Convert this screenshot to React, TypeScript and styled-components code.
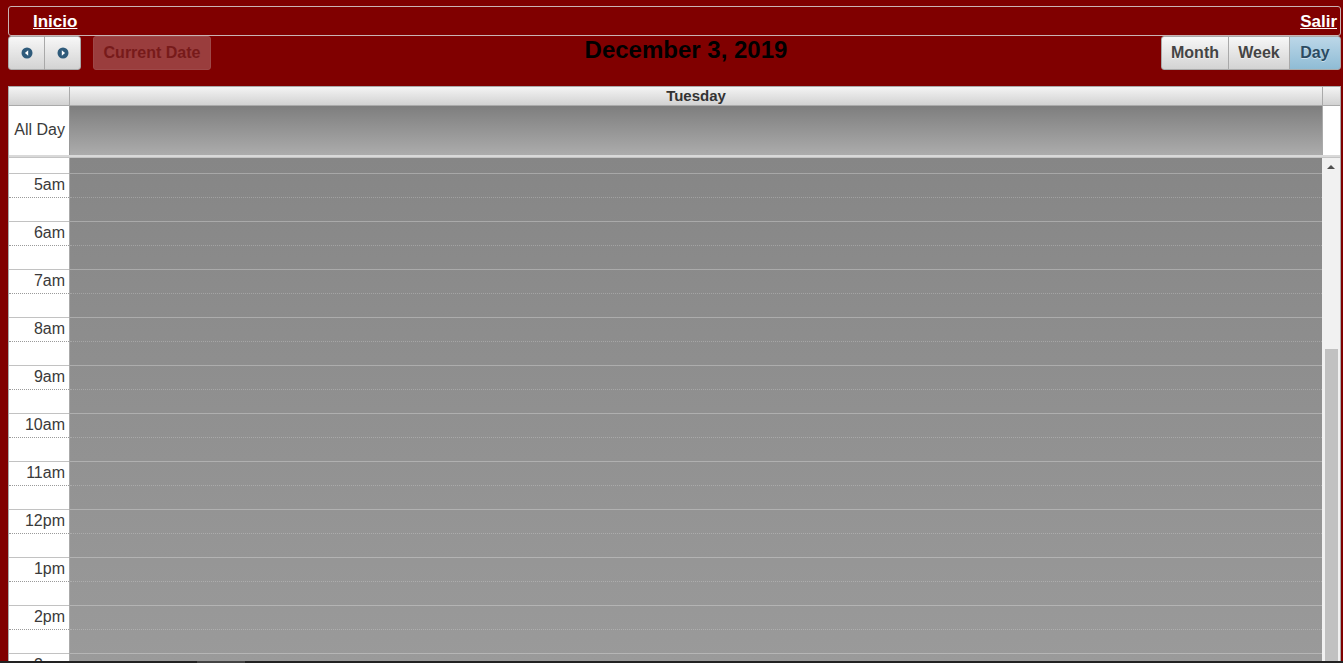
import React from 'react';
import styled, { createGlobalStyle } from 'styled-components';

const Global = createGlobalStyle`
  html, body { margin: 0; padding: 0; height: 100%; overflow: hidden; background: #800000; }
  body { font-family: "Liberation Sans", Arial, Helvetica, sans-serif; }
  * { box-sizing: border-box; }
`;

const Page = styled.div`
  height: 663px;
  display: flex;
  flex-direction: column;
  background: #800000;
  overflow: hidden;
`;

const Main = styled.div`
  flex: 1;
  min-height: 0;
  display: flex;
  flex-direction: column;
  padding: 6px 2px 0 8px;
`;

const NavBox = styled.nav`
  height: 30px;
  border: 1px solid #c9b3b3;
  border-radius: 3px;
  display: flex;
  align-items: center;
  justify-content: space-between;
  padding: 1px 3px 0 24px;
`;

const NavLink = styled.a`
  color: #fff;
  font-weight: bold;
  font-size: 17px;
  text-decoration: underline;
  cursor: pointer;
`;

const Toolbar = styled.div`
  display: flex;
  align-items: flex-start;
  height: 34px;
  margin-bottom: 16px;
`;

const Section = styled.div<{ $w?: number; $justify?: string }>`
  display: flex;
  width: ${(p) => (p.$w ? `${p.$w}px` : 'auto')};
  flex: ${(p) => (p.$w ? '0 0 auto' : '1')};
  justify-content: ${(p) => p.$justify || 'flex-start'};
`;

const Title = styled.h2`
  flex: 1;
  margin: 0;
  text-align: center;
  font-size: 24px;
  line-height: 28px;
  font-weight: bold;
  color: #000;
`;

const Button = styled.button<{ $w: number; $active?: boolean; $first?: boolean; $last?: boolean }>`
  width: ${(p) => p.$w}px;
  height: 34px;
  margin: 0 0 0 ${(p) => (p.$first ? 0 : -1)}px;
  padding: 0;
  display: flex;
  align-items: center;
  justify-content: center;
  border: 1px solid #a9a9a9;
  border-radius: ${(p) => `${p.$first ? 3 : 0}px ${p.$last ? 3 : 0}px ${p.$last ? 3 : 0}px ${p.$first ? 3 : 0}px`};
  background: ${(p) =>
    p.$active
      ? 'linear-gradient(to bottom, #bcd7e8 0%, #8fbcd5 100%)'
      : 'linear-gradient(to bottom, #f7f7f7 0%, #d3d3d3 100%)'};
  color: ${(p) => (p.$active ? '#2b4b62' : '#444')};
  font-family: "Liberation Sans", Arial, sans-serif;
  font-weight: bold;
  font-size: 16px;
  text-shadow: 0 1px 0 rgba(255, 255, 255, 0.5);
  cursor: pointer;
`;

const TodayButton = styled.button`
  width: 118px;
  height: 34px;
  margin-left: 12px;
  border: 1px solid #9e4848;
  border-radius: 3px;
  background: #9a3d3d;
  color: #771a1a;
  font-family: "Liberation Sans", Arial, sans-serif;
  font-weight: bold;
  font-size: 16px;
  padding: 0;
`;

const Calendar = styled.div`
  flex: 1;
  min-height: 0;
  display: flex;
  flex-direction: column;
  border: 1px solid #aaa;
  border-bottom: none;
  background: #fff;
`;

const HeaderRow = styled.div`
  display: flex;
  height: 19px;
  border-bottom: 1px solid #aaa;
  background: linear-gradient(to bottom, #f4f4f4 0%, #d2d2d2 100%);
`;

const AxisHead = styled.div`
  width: 61px;
  border-right: 1px solid #aaa;
`;

const DayHead = styled.div`
  flex: 1;
  text-align: center;
  font-weight: bold;
  font-size: 15px;
  line-height: 18px;
  color: #333;
`;

const GutterHead = styled.div<{ $white?: boolean }>`
  width: 18px;
  border-left: 1px solid #aaa;
  background: ${(p) => (p.$white ? '#fff' : 'transparent')};
`;

const AllDayRow = styled.div`
  display: flex;
  height: 49px;
`;

const AxisLabelCell = styled.div`
  width: 61px;
  border-right: 1px solid #999;
  display: flex;
  align-items: center;
  justify-content: flex-end;
  padding: 0 4px 1px 0;
  font-size: 16px;
  color: #3a3a3a;
  background: #fff;
`;

const AllDayCell = styled.div`
  flex: 1;
  background: linear-gradient(to bottom, #7e7e7e 0%, #acacac 100%);
`;

const Divider = styled.div`
  height: 3px;
  background: #d9d9d9;
  border-bottom: 1px solid #c4c4c4;
`;

const Body = styled.div`
  flex: 1;
  min-height: 0;
  display: flex;
  overflow: hidden;
`;

const AxisCol = styled.div`
  width: 61px;
  border-right: 1px solid #aaa;
  background: #fff;
  overflow: hidden;
`;

const DayCol = styled.div`
  flex: 1;
  overflow: hidden;
  background: linear-gradient(to bottom, #868686 0%, #9a9a9a 100%);
`;

const SlotList = styled.div`
  margin-top: -9px;
`;

const AxisSlot = styled.div<{ $hour: boolean }>`
  height: 24px;
  border-top: 1px ${(p) => (p.$hour ? 'solid #c2c2c2' : 'dotted #9a9a9a')};
  text-align: right;
  padding-right: 4px;
  font-size: 16px;
  line-height: 22px;
  color: #3a3a3a;
  white-space: nowrap;
`;

const DaySlot = styled.div<{ $hour: boolean }>`
  height: 24px;
  border-top: 1px ${(p) => (p.$hour ? 'solid rgba(255,255,255,0.28)' : 'dotted rgba(255,255,255,0.22)')};
`;

const Gutter = styled.div`
  width: 18px;
  background: #f1f1f1;
  display: flex;
  flex-direction: column;
  align-items: center;
`;

const ArrowUp = styled.div`
  margin-top: 7px;
  width: 0;
  height: 0;
  border-left: 4px solid transparent;
  border-right: 4px solid transparent;
  border-bottom: 4px solid #505050;
`;

const Thumb = styled.div`
  margin-top: auto;
  width: 13px;
  height: 312px;
  background: #c1c1c1;
`;

const PageScroll = styled.div`
  height: 2px;
  background: #222;
  display: flex;
`;

const PageThumb = styled.div`
  margin-left: 197px;
  width: 48px;
  background: #444;
`;

const CircleArrow: React.FC<{ dir: 'left' | 'right' }> = ({ dir }) => (
  <svg width="12" height="12" viewBox="0 0 12 12">
    <circle cx="6" cy="6" r="5.5" fill="#2f5b7b" />
    {dir === 'left' ? (
      <polygon points="7.2,3.2 7.2,8.8 3.9,6" fill="#fff" />
    ) : (
      <polygon points="4.8,3.2 4.8,8.8 8.1,6" fill="#fff" />
    )}
  </svg>
);

const formatHour = (h: number) => {
  const suffix = h < 12 ? 'am' : 'pm';
  const hh = h % 12 === 0 ? 12 : h % 12;
  return `${hh}${suffix}`;
};

const slots: { hour: boolean; label: string }[] = [];
for (let i = 9; i < 40; i++) {
  const hour = i % 2 === 0;
  slots.push({ hour, label: hour ? formatHour(i / 2) : '' });
}

export default function App() {
  return (
    <Page>
      <Global />
      <Main>
        <NavBox>
          <NavLink>Inicio</NavLink>
          <NavLink>Salir</NavLink>
        </NavBox>
        <Toolbar>
          <Section $w={203}>
            <Button $w={37} $first>
              <CircleArrow dir="left" />
            </Button>
            <Button $w={37} $last>
              <CircleArrow dir="right" />
            </Button>
            <TodayButton disabled>Current Date</TodayButton>
          </Section>
          <Title>December 3, 2019</Title>
          <Section $w={180} $justify="flex-end">
            <Button $w={68} $first>Month</Button>
            <Button $w={62}>Week</Button>
            <Button $w={52} $last $active>Day</Button>
          </Section>
        </Toolbar>
        <Calendar>
          <HeaderRow>
            <AxisHead />
            <DayHead>Tuesday</DayHead>
            <GutterHead />
          </HeaderRow>
          <AllDayRow>
            <AxisLabelCell>All Day</AxisLabelCell>
            <AllDayCell />
            <GutterHead $white />
          </AllDayRow>
          <Divider />
          <Body>
            <AxisCol>
              <SlotList>
                {slots.map((s, i) => (
                  <AxisSlot key={i} $hour={s.hour}>{s.label}</AxisSlot>
                ))}
              </SlotList>
            </AxisCol>
            <DayCol>
              <SlotList>
                {slots.map((s, i) => (
                  <DaySlot key={i} $hour={s.hour} />
                ))}
              </SlotList>
            </DayCol>
            <Gutter>
              <ArrowUp />
              <Thumb />
            </Gutter>
          </Body>
        </Calendar>
      </Main>
      <PageScroll>
        <PageThumb />
      </PageScroll>
    </Page>
  );
}
